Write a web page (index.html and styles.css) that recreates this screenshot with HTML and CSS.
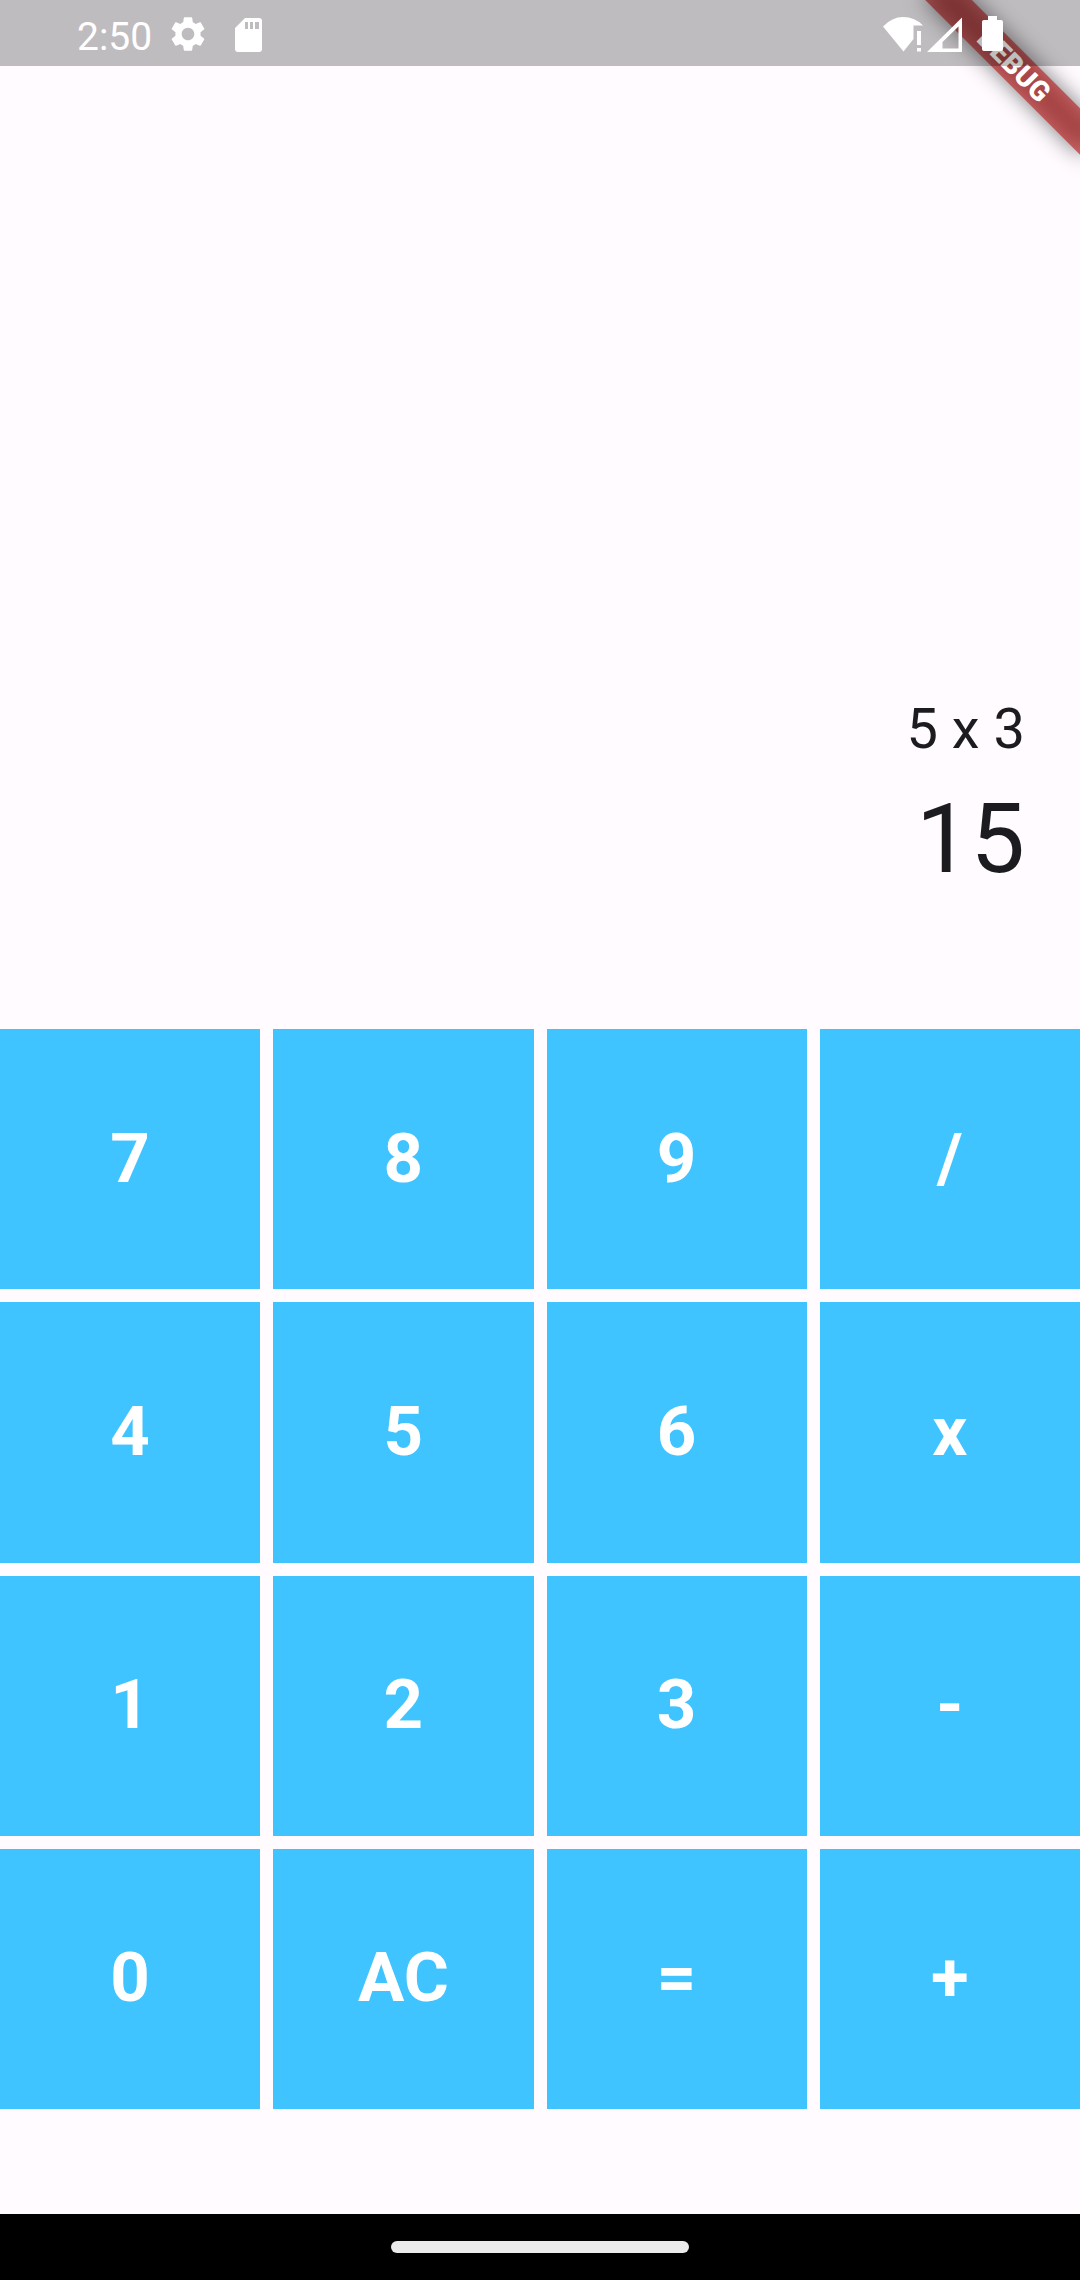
FILE: index.html
```html
<!DOCTYPE html>
<html lang="en">
<head>
  <meta charset="utf-8">
  <meta name="viewport" content="width=device-width, initial-scale=1">
  <title>Calculator</title>
  <link rel="stylesheet" href="styles.css">
</head>
<body>
  <div class="screen">
    <div class="debug-banner">DEBUG</div>

    <header class="status-bar">
      <time class="clock">2:50</time>
      <svg class="gear" viewBox="0 0 24 24" aria-hidden="true"><path d="M19.14 12.94c.04-.3.06-.61.06-.94 0-.32-.02-.64-.07-.94l2.03-1.58c.18-.14.23-.41.12-.61l-1.92-3.32c-.12-.22-.37-.29-.59-.22l-2.39.96c-.5-.38-1.03-.7-1.62-.94l-.36-2.54c-.04-.24-.24-.41-.48-.41h-3.84c-.24 0-.43.17-.47.41l-.36 2.54c-.59.24-1.13.57-1.62.94l-2.39-.96c-.22-.08-.47 0-.59.22L2.74 8.87c-.12.21-.08.47.12.61l2.03 1.58c-.05.3-.09.63-.09.94s.02.64.07.94l-2.03 1.58c-.18.14-.23.41-.12.61l1.92 3.32c.12.22.37.29.59.22l2.39-.96c.5.38 1.03.7 1.62.94l.36 2.54c.05.24.24.41.48.41h3.84c.24 0 .44-.17.47-.41l.36-2.54c.59-.24 1.13-.56 1.62-.94l2.39.96c.22.08.47 0 .59-.22l1.92-3.32c.12-.22.07-.47-.12-.61l-2.01-1.58zM12 15.6c-1.98 0-3.6-1.62-3.6-3.6s1.62-3.6 3.6-3.6 3.6 1.62 3.6 3.6-1.62 3.6-3.6 3.6z"/></svg>
      <svg class="card" viewBox="0 0 27 36" aria-hidden="true"><path fill-rule="evenodd" d="M10 2H24Q27 2 27 5V33Q27 36 24 36H3Q0 36 0 33V12ZM10 6V13H13V6ZM15 6V13H18V6ZM20 6V13H24V6Z"/></svg>
      <div class="signals">
        <svg class="wifi" viewBox="0 0 40 36" aria-hidden="true"><path d="M0 10.500Q9 1 20 1Q32 1 40 9.500H30.500V23L20.500 35.500ZM34 15h4v14h-4ZM34 32h4v3.500h-4Z"/></svg>
        <svg class="cell" viewBox="0 0 35 36" aria-hidden="true"><path fill-rule="evenodd" d="M0 36L35 1.500V36ZM31.500 10.500L15.500 26V32.500H31.500Z"/></svg>
        <svg class="battery" viewBox="0 0 21 36" aria-hidden="true"><path d="M6 0H15V4H19Q21 4 21 6V33Q21 35 19 35H2Q0 35 0 33V6Q0 4 2 4H6Z"/></svg>
      </div>
    </header>

    <main class="calculator">
      <section class="display" aria-label="Display">
        <p class="expression">5 x 3</p>
        <output class="result">15</output>
      </section>
      <div class="keypad">
        <button type="button">7</button>
        <button type="button">8</button>
        <button type="button">9</button>
        <button type="button">/</button>
        <button type="button">4</button>
        <button type="button">5</button>
        <button type="button">6</button>
        <button type="button">x</button>
        <button type="button">1</button>
        <button type="button">2</button>
        <button type="button">3</button>
        <button type="button">-</button>
        <button type="button">0</button>
        <button type="button">AC</button>
        <button type="button">=</button>
        <button type="button">+</button>
      </div>
    </main>

    <footer class="nav-bar"><span class="nav-handle"></span></footer>
  </div>
</body>
</html>
```
FILE: styles.css
```css
* {
  box-sizing: border-box;
}

body {
  margin: 0;
  background: #fffbff;
  color: #1c1b1f;
  font-family: Roboto, sans-serif;
}

.screen {
  position: relative;
  display: flex;
  flex-direction: column;
  min-height: 100vh;
  overflow: hidden;
}

/* Status bar: a translucent strip that also tints the banner below it */
.status-bar {
  position: relative;
  display: flex;
  align-items: center;
  height: 66px;
  padding: 2px 77px 0;
  background: rgba(0, 0, 0, 0.25);
  color: #fff;
}

.status-bar svg {
  flex: none;
  height: 36px;
  fill: currentColor;
}

.clock {
  padding-top: 6px;
  font-size: 39px;
  line-height: 44px;
}

.status-bar .gear {
  width: 42px;
  height: 42px;
  margin-left: 15px;
}

.card {
  width: 27px;
  margin-left: 26px;
}

.signals {
  display: flex;
  gap: 4px;
  margin-left: auto;
}

.wifi {
  width: 40px;
}

.cell {
  width: 35px;
}

.battery {
  width: 21px;
  margin-left: 16px;
}

/* Corner ribbon */
.debug-banner {
  position: absolute;
  top: 49px;
  right: -44px;
  isolation: isolate;
  width: 220px;
  height: 33px;
  color: #fff;
  font-size: 28px;
  font-weight: 900;
  line-height: 33px;
  text-align: center;
  transform: rotate(45deg);
}

.debug-banner::before,
.debug-banner::after {
  content: "";
  position: absolute;
  inset: 0;
}

.debug-banner::before {
  z-index: -2;
  background: rgba(0, 0, 0, 0.5);
  filter: blur(11px);
}

.debug-banner::after {
  z-index: -1;
  background: rgba(183, 28, 28, 0.63);
}

/* Calculator */
.calculator {
  display: flex;
  flex: 1;
  flex-direction: column;
  padding-bottom: 105px;
}

.display {
  display: flex;
  flex: 1;
  flex-direction: column;
  justify-content: flex-end;
  padding: 0 55px 120px;
  text-align: right;
}

.expression {
  margin: 0;
  font-size: 56px;
  line-height: 80px;
}

.result {
  font-size: 97px;
  line-height: 140px;
}

.keypad {
  display: grid;
  grid-template-columns: repeat(4, 1fr);
  gap: 13px;
}

.keypad button {
  aspect-ratio: 1;
  padding: 0 0 2px;
  border: 0;
  background: #40c4ff;
  color: #fff;
  font: bold 69px Roboto, sans-serif;
}

/* Gesture navigation */
.nav-bar {
  display: flex;
  align-items: center;
  justify-content: center;
  height: 66px;
  background: #000;
}

.nav-handle {
  width: 298px;
  height: 12px;
  border-radius: 6px;
  background: #ebebeb;
}
```
